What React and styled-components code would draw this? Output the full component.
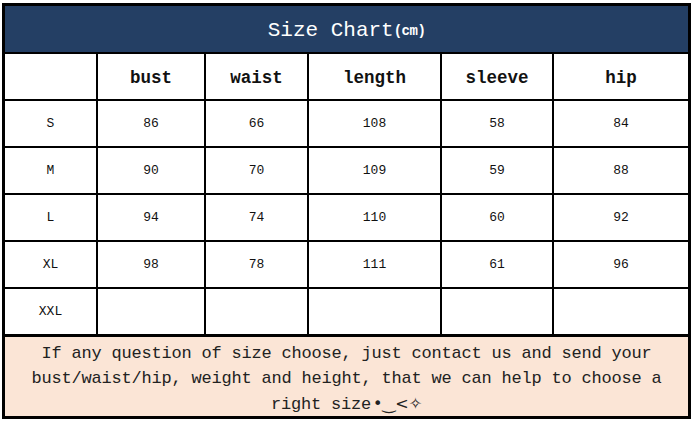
import React from 'react';
import styled, { createGlobalStyle } from 'styled-components';

const GlobalStyle = createGlobalStyle`
  html, body {
    margin: 0;
    padding: 0;
    background: #fff;
  }
  body {
    font-family: "Liberation Mono", "DejaVu Sans Mono", monospace;
  }
`;

const sizes = [
  { label: 'S', values: ['86', '66', '108', '58', '84'] },
  { label: 'M', values: ['90', '70', '109', '59', '88'] },
  { label: 'L', values: ['94', '74', '110', '60', '92'] },
  { label: 'XL', values: ['98', '78', '111', '61', '96'] },
  { label: 'XXL', values: ['', '', '', '', ''] },
];

const columns = ['bust', 'waist', 'length', 'sleeve', 'hip'];

const App = () => (
  <>
    <GlobalStyle />
    <Page>
      <Frame>
        <Grid>
          <Title>
            Size Chart<Unit>(cm)</Unit>
          </Title>
          <HeadCell />
          {columns.map((c) => (
            <HeadCell key={c}>{c}</HeadCell>
          ))}
          {sizes.map((row) => (
            <React.Fragment key={row.label}>
              <Cell>{row.label}</Cell>
              {row.values.map((v, i) => (
                <Cell key={i}>{v}</Cell>
              ))}
            </React.Fragment>
          ))}
        </Grid>
        <Note>
          If any question of size choose, just contact us and send your
          <br />
          bust/waist/hip, weight and height, that we can help to choose a
          <br />
          right size<Face>•‿&lt;✧</Face>
        </Note>
      </Frame>
    </Page>
  </>
);

const Page = styled.div`
  padding: 3px 0 0 2px;
`;

const Frame = styled.div`
  width: 683px;
  border: 3px solid #000;
  background: #000;
  display: flex;
  flex-direction: column;
`;

const Grid = styled.div`
  display: grid;
  grid-template-columns: 91px 106px 101px 131px 110px 134px;
  grid-template-rows: 46px repeat(6, 45px);
  gap: 2px;
  background: #000;
`;

const Title = styled.div`
  grid-column: 1 / -1;
  background: #243f64;
  color: #fff;
  font-size: 21px;
  display: flex;
  align-items: center;
  justify-content: center;
  padding-top: 3px;
  box-sizing: border-box;
`;

const Unit = styled.span`
  font-size: 14px;
  font-weight: bold;
  letter-spacing: -0.5px;
`;

const Cell = styled.div`
  background: #fff;
  color: #111;
  font-size: 13px;
  display: flex;
  align-items: center;
  justify-content: center;
`;

const HeadCell = styled(Cell)`
  font-size: 17.5px;
  font-weight: bold;
  padding-top: 3px;
  box-sizing: border-box;
`;

const Note = styled.div`
  border-top: 3px solid #000;
  background: #fbe5d6;
  height: 75px;
  padding: 4px 0 0;
  text-align: center;
  color: #222;
  font-size: 17px;
  letter-spacing: -0.2px;
  line-height: 25px;
`;

const Face = styled.span`
  font-family: "DejaVu Sans", sans-serif;
  font-size: 16px;
  letter-spacing: 0;
  margin-left: 2px;
`;

export default App;
